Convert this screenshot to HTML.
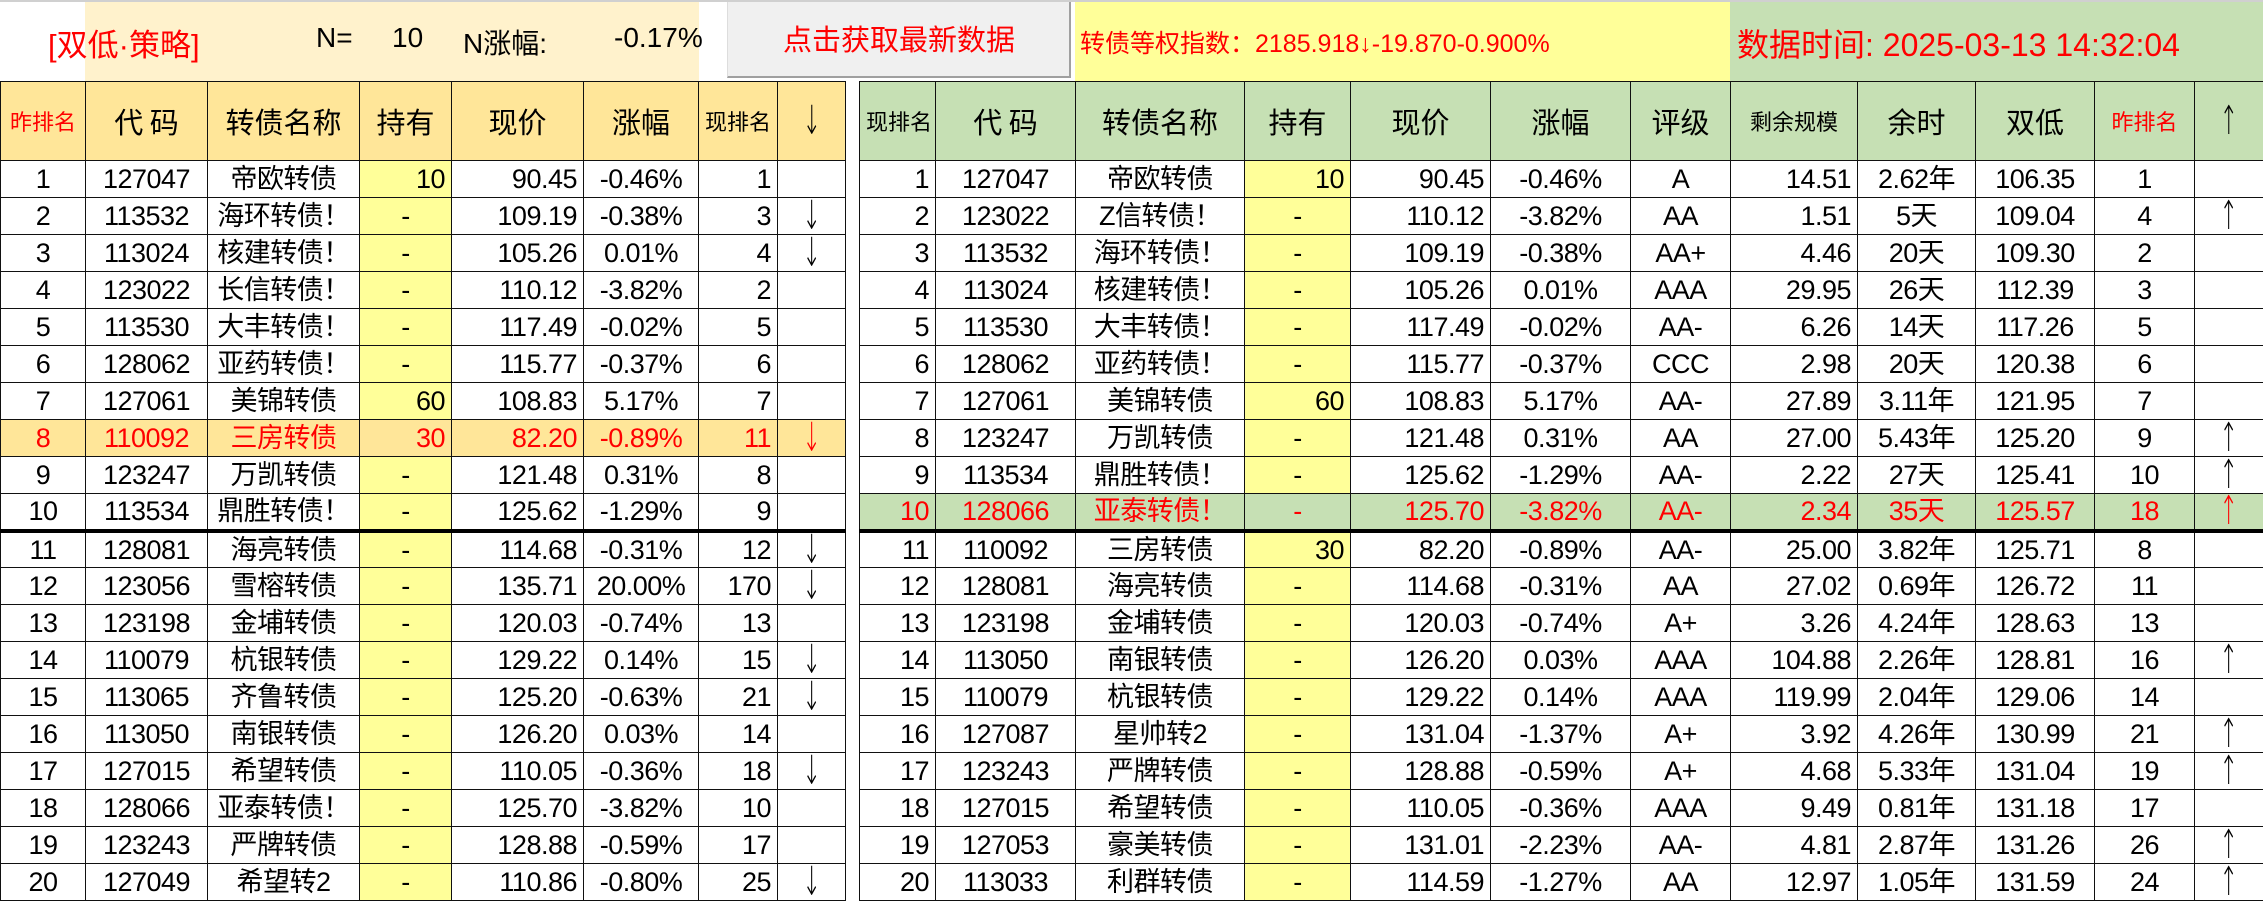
<!DOCTYPE html>
<html><head><meta charset="utf-8">
<style>
*{margin:0;padding:0;box-sizing:border-box}
body{width:2263px;height:902px;overflow:hidden;background:#fff;position:relative;font-family:"Liberation Sans Narrow","Liberation Sans","Noto Sans CJK SC",sans-serif;color:#000}
.abs{position:absolute;white-space:nowrap}
table{position:absolute;top:81px;border-collapse:collapse;table-layout:fixed}
td{border:1.5px solid #111;height:37px;font-size:27px;line-height:34px;padding:0 6px;white-space:nowrap;overflow:hidden;letter-spacing:-0.5px}
tr.h td{height:79px;text-align:center;font-size:29px;font-family:"Noto Sans CJK SC",sans-serif;letter-spacing:0}
#L tr.h td{background:#FFE699}
#R tr.h td{background:#C6E0B4}
td.s{font-size:22px!important}
.c{text-align:center}.r{text-align:right}
.y{background:#FFFF99}
tr.hl1 td{background:#FFE699;color:#f00}
tr.hl2 td{background:#C6E0B4;color:#f00}
tr.tb td{border-bottom:4px solid #000}
td.a{font-size:40px!important;line-height:34px;font-family:"DejaVu Sans","Liberation Sans",sans-serif!important;font-weight:200}
td.a span{display:inline-block;transform:scaleX(0.55)}
</style></head><body>
<div class="abs" style="left:0;top:0;width:2263px;height:2px;background:#d0d0d0"></div>
<div class="abs" style="left:85px;top:2px;width:614px;height:79px;background:#FFF2CC"></div>
<div class="abs" style="left:48px;top:20px;font-size:31px;color:#f00;font-family:'Liberation Sans','Noto Sans CJK SC',sans-serif">[双低<span style="font-family:'Liberation Sans'">·</span>策略]</div>
<div class="abs" style="left:316px;top:22px;font-size:28px">N=</div>
<div class="abs" style="left:392px;top:22px;font-size:28px">10</div>
<div class="abs" style="left:463px;top:22px;font-size:28px">N涨幅:</div>
<div class="abs" style="left:614px;top:22px;font-size:28px">-0.17%</div>
<div class="abs" style="left:727px;top:2px;width:344px;height:76px;background:#f0f0f0;border-right:2px solid #a0a0a0;border-bottom:2px solid #a0a0a0;border-left:1px solid #ddd"></div>
<div class="abs" style="left:727px;top:17px;width:344px;text-align:center;font-size:29px;color:#f00;font-family:'Noto Sans CJK SC',sans-serif">点击获取最新数据</div>
<div class="abs" style="left:1075px;top:2px;width:655px;height:79px;background:#FFFF99"></div>
<div class="abs" style="left:1080px;top:24px;font-size:25px;color:#f00">转债等权指数：2185.918↓-19.870-0.900%</div>
<div class="abs" style="left:1730px;top:2px;width:533px;height:79px;background:#C6E0B4"></div>
<div class="abs" style="left:1737px;top:20px;font-size:32px;color:#f00">数据时间: 2025-03-13 14:32:04</div>

<table id="L" style="left:0;width:845px">
<colgroup><col style="width:85px"><col style="width:122px"><col style="width:152px"><col style="width:92px"><col style="width:132px"><col style="width:115px"><col style="width:79px"><col style="width:68px"></colgroup>
<tr class="h"><td class="s" style="color:#f00">昨排名</td><td>代 码</td><td>转债名称</td><td>持有</td><td>现价</td><td>涨幅</td><td class="s">现排名</td><td class="a"><span>↓</span></td></tr>
<tr><td class="c">1</td><td class="c">127047</td><td class="c">帝欧转债</td><td class="r y">10</td><td class="r">90.45</td><td class="c">-0.46%</td><td class="r">1</td><td class="c"></td></tr>
<tr><td class="c">2</td><td class="c">113532</td><td class="c">海环转债！</td><td class="c y">-</td><td class="r">109.19</td><td class="c">-0.38%</td><td class="r">3</td><td class="c a"><span>↓</span></td></tr>
<tr><td class="c">3</td><td class="c">113024</td><td class="c">核建转债！</td><td class="c y">-</td><td class="r">105.26</td><td class="c">0.01%</td><td class="r">4</td><td class="c a"><span>↓</span></td></tr>
<tr><td class="c">4</td><td class="c">123022</td><td class="c">长信转债！</td><td class="c y">-</td><td class="r">110.12</td><td class="c">-3.82%</td><td class="r">2</td><td class="c"></td></tr>
<tr><td class="c">5</td><td class="c">113530</td><td class="c">大丰转债！</td><td class="c y">-</td><td class="r">117.49</td><td class="c">-0.02%</td><td class="r">5</td><td class="c"></td></tr>
<tr><td class="c">6</td><td class="c">128062</td><td class="c">亚药转债！</td><td class="c y">-</td><td class="r">115.77</td><td class="c">-0.37%</td><td class="r">6</td><td class="c"></td></tr>
<tr><td class="c">7</td><td class="c">127061</td><td class="c">美锦转债</td><td class="r y">60</td><td class="r">108.83</td><td class="c">5.17%</td><td class="r">7</td><td class="c"></td></tr>
<tr class="hl1"><td class="c">8</td><td class="c">110092</td><td class="c">三房转债</td><td class="r">30</td><td class="r">82.20</td><td class="c">-0.89%</td><td class="r">11</td><td class="c a"><span>↓</span></td></tr>
<tr><td class="c">9</td><td class="c">123247</td><td class="c">万凯转债</td><td class="c y">-</td><td class="r">121.48</td><td class="c">0.31%</td><td class="r">8</td><td class="c"></td></tr>
<tr class="tb"><td class="c">10</td><td class="c">113534</td><td class="c">鼎胜转债！</td><td class="c y">-</td><td class="r">125.62</td><td class="c">-1.29%</td><td class="r">9</td><td class="c"></td></tr>
<tr><td class="c">11</td><td class="c">128081</td><td class="c">海亮转债</td><td class="c y">-</td><td class="r">114.68</td><td class="c">-0.31%</td><td class="r">12</td><td class="c a"><span>↓</span></td></tr>
<tr><td class="c">12</td><td class="c">123056</td><td class="c">雪榕转债</td><td class="c y">-</td><td class="r">135.71</td><td class="c">20.00%</td><td class="r">170</td><td class="c a"><span>↓</span></td></tr>
<tr><td class="c">13</td><td class="c">123198</td><td class="c">金埔转债</td><td class="c y">-</td><td class="r">120.03</td><td class="c">-0.74%</td><td class="r">13</td><td class="c"></td></tr>
<tr><td class="c">14</td><td class="c">110079</td><td class="c">杭银转债</td><td class="c y">-</td><td class="r">129.22</td><td class="c">0.14%</td><td class="r">15</td><td class="c a"><span>↓</span></td></tr>
<tr><td class="c">15</td><td class="c">113065</td><td class="c">齐鲁转债</td><td class="c y">-</td><td class="r">125.20</td><td class="c">-0.63%</td><td class="r">21</td><td class="c a"><span>↓</span></td></tr>
<tr><td class="c">16</td><td class="c">113050</td><td class="c">南银转债</td><td class="c y">-</td><td class="r">126.20</td><td class="c">0.03%</td><td class="r">14</td><td class="c"></td></tr>
<tr><td class="c">17</td><td class="c">127015</td><td class="c">希望转债</td><td class="c y">-</td><td class="r">110.05</td><td class="c">-0.36%</td><td class="r">18</td><td class="c a"><span>↓</span></td></tr>
<tr><td class="c">18</td><td class="c">128066</td><td class="c">亚泰转债！</td><td class="c y">-</td><td class="r">125.70</td><td class="c">-3.82%</td><td class="r">10</td><td class="c"></td></tr>
<tr><td class="c">19</td><td class="c">123243</td><td class="c">严牌转债</td><td class="c y">-</td><td class="r">128.88</td><td class="c">-0.59%</td><td class="r">17</td><td class="c"></td></tr>
<tr><td class="c">20</td><td class="c">127049</td><td class="c">希望转2</td><td class="c y">-</td><td class="r">110.86</td><td class="c">-0.80%</td><td class="r">25</td><td class="c a"><span>↓</span></td></tr>
</table>

<table id="R" style="left:859px;width:1404px">
<colgroup><col style="width:76px"><col style="width:140px"><col style="width:169px"><col style="width:106px"><col style="width:140px"><col style="width:140px"><col style="width:100px"><col style="width:127px"><col style="width:118px"><col style="width:119px"><col style="width:100px"><col style="width:69px"></colgroup>
<tr class="h"><td class="s">现排名</td><td>代 码</td><td>转债名称</td><td>持有</td><td>现价</td><td>涨幅</td><td>评级</td><td class="s">剩余规模</td><td>余时</td><td>双低</td><td class="s" style="color:#f00">昨排名</td><td class="a"><span>↑</span></td></tr>
<tr><td class="r">1</td><td class="c">127047</td><td class="c">帝欧转债</td><td class="r y">10</td><td class="r">90.45</td><td class="c">-0.46%</td><td class="c">A</td><td class="r">14.51</td><td class="c">2.62年</td><td class="c">106.35</td><td class="c">1</td><td class="c"></td></tr>
<tr><td class="r">2</td><td class="c">123022</td><td class="c">Z信转债！</td><td class="c y">-</td><td class="r">110.12</td><td class="c">-3.82%</td><td class="c">AA</td><td class="r">1.51</td><td class="c">5天</td><td class="c">109.04</td><td class="c">4</td><td class="c a"><span>↑</span></td></tr>
<tr><td class="r">3</td><td class="c">113532</td><td class="c">海环转债！</td><td class="c y">-</td><td class="r">109.19</td><td class="c">-0.38%</td><td class="c">AA+</td><td class="r">4.46</td><td class="c">20天</td><td class="c">109.30</td><td class="c">2</td><td class="c"></td></tr>
<tr><td class="r">4</td><td class="c">113024</td><td class="c">核建转债！</td><td class="c y">-</td><td class="r">105.26</td><td class="c">0.01%</td><td class="c">AAA</td><td class="r">29.95</td><td class="c">26天</td><td class="c">112.39</td><td class="c">3</td><td class="c"></td></tr>
<tr><td class="r">5</td><td class="c">113530</td><td class="c">大丰转债！</td><td class="c y">-</td><td class="r">117.49</td><td class="c">-0.02%</td><td class="c">AA-</td><td class="r">6.26</td><td class="c">14天</td><td class="c">117.26</td><td class="c">5</td><td class="c"></td></tr>
<tr><td class="r">6</td><td class="c">128062</td><td class="c">亚药转债！</td><td class="c y">-</td><td class="r">115.77</td><td class="c">-0.37%</td><td class="c">CCC</td><td class="r">2.98</td><td class="c">20天</td><td class="c">120.38</td><td class="c">6</td><td class="c"></td></tr>
<tr><td class="r">7</td><td class="c">127061</td><td class="c">美锦转债</td><td class="r y">60</td><td class="r">108.83</td><td class="c">5.17%</td><td class="c">AA-</td><td class="r">27.89</td><td class="c">3.11年</td><td class="c">121.95</td><td class="c">7</td><td class="c"></td></tr>
<tr><td class="r">8</td><td class="c">123247</td><td class="c">万凯转债</td><td class="c y">-</td><td class="r">121.48</td><td class="c">0.31%</td><td class="c">AA</td><td class="r">27.00</td><td class="c">5.43年</td><td class="c">125.20</td><td class="c">9</td><td class="c a"><span>↑</span></td></tr>
<tr><td class="r">9</td><td class="c">113534</td><td class="c">鼎胜转债！</td><td class="c y">-</td><td class="r">125.62</td><td class="c">-1.29%</td><td class="c">AA-</td><td class="r">2.22</td><td class="c">27天</td><td class="c">125.41</td><td class="c">10</td><td class="c a"><span>↑</span></td></tr>
<tr class="hl2 tb"><td class="r">10</td><td class="c">128066</td><td class="c">亚泰转债！</td><td class="c">-</td><td class="r">125.70</td><td class="c">-3.82%</td><td class="c">AA-</td><td class="r">2.34</td><td class="c">35天</td><td class="c">125.57</td><td class="c">18</td><td class="c a"><span>↑</span></td></tr>
<tr><td class="r">11</td><td class="c">110092</td><td class="c">三房转债</td><td class="r y">30</td><td class="r">82.20</td><td class="c">-0.89%</td><td class="c">AA-</td><td class="r">25.00</td><td class="c">3.82年</td><td class="c">125.71</td><td class="c">8</td><td class="c"></td></tr>
<tr><td class="r">12</td><td class="c">128081</td><td class="c">海亮转债</td><td class="c y">-</td><td class="r">114.68</td><td class="c">-0.31%</td><td class="c">AA</td><td class="r">27.02</td><td class="c">0.69年</td><td class="c">126.72</td><td class="c">11</td><td class="c"></td></tr>
<tr><td class="r">13</td><td class="c">123198</td><td class="c">金埔转债</td><td class="c y">-</td><td class="r">120.03</td><td class="c">-0.74%</td><td class="c">A+</td><td class="r">3.26</td><td class="c">4.24年</td><td class="c">128.63</td><td class="c">13</td><td class="c"></td></tr>
<tr><td class="r">14</td><td class="c">113050</td><td class="c">南银转债</td><td class="c y">-</td><td class="r">126.20</td><td class="c">0.03%</td><td class="c">AAA</td><td class="r">104.88</td><td class="c">2.26年</td><td class="c">128.81</td><td class="c">16</td><td class="c a"><span>↑</span></td></tr>
<tr><td class="r">15</td><td class="c">110079</td><td class="c">杭银转债</td><td class="c y">-</td><td class="r">129.22</td><td class="c">0.14%</td><td class="c">AAA</td><td class="r">119.99</td><td class="c">2.04年</td><td class="c">129.06</td><td class="c">14</td><td class="c"></td></tr>
<tr><td class="r">16</td><td class="c">127087</td><td class="c">星帅转2</td><td class="c y">-</td><td class="r">131.04</td><td class="c">-1.37%</td><td class="c">A+</td><td class="r">3.92</td><td class="c">4.26年</td><td class="c">130.99</td><td class="c">21</td><td class="c a"><span>↑</span></td></tr>
<tr><td class="r">17</td><td class="c">123243</td><td class="c">严牌转债</td><td class="c y">-</td><td class="r">128.88</td><td class="c">-0.59%</td><td class="c">A+</td><td class="r">4.68</td><td class="c">5.33年</td><td class="c">131.04</td><td class="c">19</td><td class="c a"><span>↑</span></td></tr>
<tr><td class="r">18</td><td class="c">127015</td><td class="c">希望转债</td><td class="c y">-</td><td class="r">110.05</td><td class="c">-0.36%</td><td class="c">AAA</td><td class="r">9.49</td><td class="c">0.81年</td><td class="c">131.18</td><td class="c">17</td><td class="c"></td></tr>
<tr><td class="r">19</td><td class="c">127053</td><td class="c">豪美转债</td><td class="c y">-</td><td class="r">131.01</td><td class="c">-2.23%</td><td class="c">AA-</td><td class="r">4.81</td><td class="c">2.87年</td><td class="c">131.26</td><td class="c">26</td><td class="c a"><span>↑</span></td></tr>
<tr><td class="r">20</td><td class="c">113033</td><td class="c">利群转债</td><td class="c y">-</td><td class="r">114.59</td><td class="c">-1.27%</td><td class="c">AA</td><td class="r">12.97</td><td class="c">1.05年</td><td class="c">131.59</td><td class="c">24</td><td class="c a"><span>↑</span></td></tr>
</table>
</body></html>
